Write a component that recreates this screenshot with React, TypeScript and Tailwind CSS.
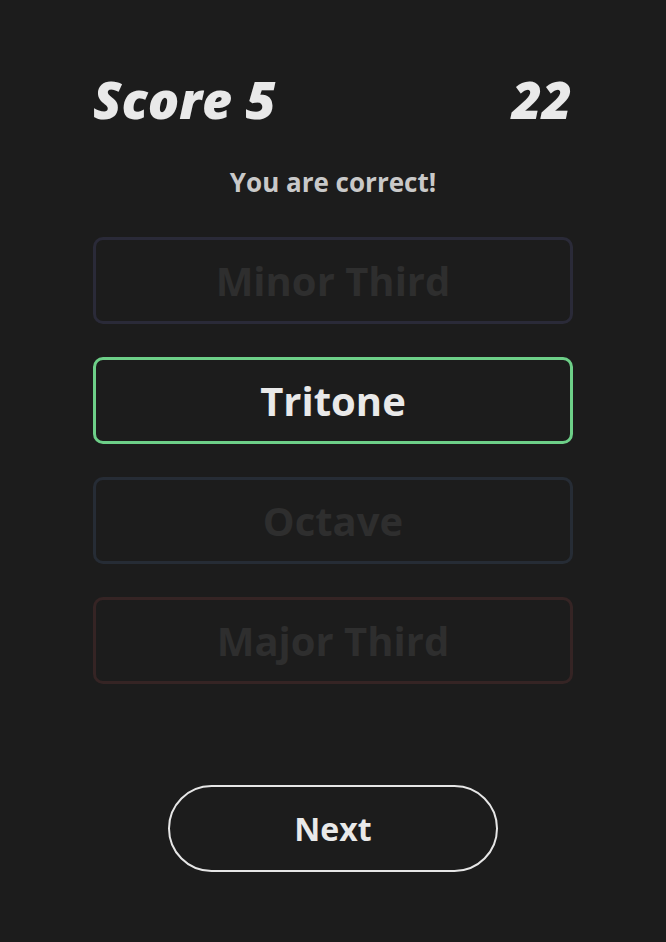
import { useState } from "react";

type Choice = {
  label: string;
  state: "idle" | "correct";
  border: string;
};

const choices: Choice[] = [
  { label: "Minor Third", state: "idle", border: "border-[#2a2a38]" },
  { label: "Tritone", state: "correct", border: "border-[#6dcf88]" },
  { label: "Octave", state: "idle", border: "border-[#262c35]" },
  { label: "Major Third", state: "idle", border: "border-[#352424]" },
];

export default function App() {
  const [score] = useState(5);
  const [timeLeft] = useState(22);

  return (
    <div
      className="min-h-[942px] bg-[#1c1c1c] text-[#e9e9e9]"
      style={{ fontFamily: '"Open Sans", "Noto Sans", sans-serif' }}
    >
      <div className="mx-auto flex w-[480px] flex-col items-center pt-[73px]">
        <div className="flex w-full items-center justify-between text-[52px] font-extrabold italic leading-none">
          <span>Score {score}</span>
          <span className="pr-[1px]">{timeLeft}</span>
        </div>

        <p className="mt-[44px] text-[26px] font-bold leading-none text-[#c9c9c9]">
          You are correct!
        </p>

        <div className="mt-[42px] flex w-full flex-col gap-[33px]">
          {choices.map((c) => (
            <button
              key={c.label}
              type="button"
              className={`flex h-[87px] w-full items-center justify-center rounded-[10px] border-[3px] text-[40px] font-bold ${c.border} ${
                c.state === "correct" ? "text-[#e9e9e9]" : "text-[#2e2e2e]"
              }`}
            >
              {c.label}
            </button>
          ))}
        </div>

        <button
          type="button"
          className="mt-[101px] flex h-[87px] w-[330px] items-center justify-center rounded-full border-2 border-[#e6e6e6] text-[32px] font-bold"
        >
          Next
        </button>
      </div>
    </div>
  );
}
